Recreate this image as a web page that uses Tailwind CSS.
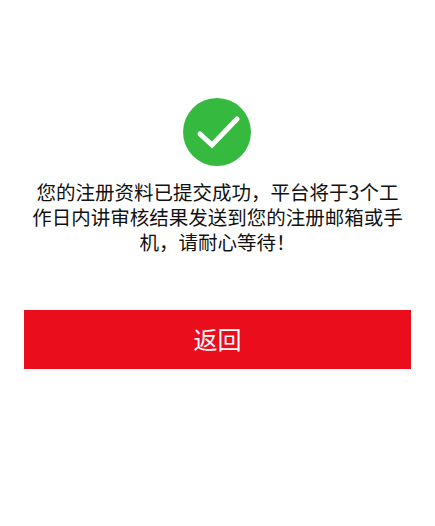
<!DOCTYPE html>
<html lang="zh-CN">
<head>
<meta charset="utf-8">
<script src="https://cdn.jsdelivr.net/npm/@tailwindcss/browser@4"></script>
</head>
<body class="bg-white font-['Noto_Sans_CJK_SC','Noto_Sans',sans-serif]">
<main class="w-[435px] h-[526px] overflow-hidden flex flex-col items-center pt-[98px] px-6">
  <svg class="w-[68px] h-[68px] shrink-0 mr-px" viewBox="0 0 68 68" aria-hidden="true">
    <circle cx="34" cy="34" r="34" fill="#35b93f"/>
    <path d="M17 36 L29 47 L54 21" fill="none" stroke="#fff" stroke-width="5" stroke-linecap="round" stroke-linejoin="miter"/>
  </svg>
  <p class="mt-[13px] w-[372px] text-center text-[19.5px] leading-[25px] text-[#111]">您的注册资料已提交成功，平台将于3个工作日内讲审核结果发送到您的注册邮箱或手机，请耐心等待！</p>
  <button class="mt-[56px] w-full h-[59px] pb-[2px] bg-[#ea0d1c] text-white text-[24px] flex items-center justify-center">返回</button>
</main>
</body>
</html>
